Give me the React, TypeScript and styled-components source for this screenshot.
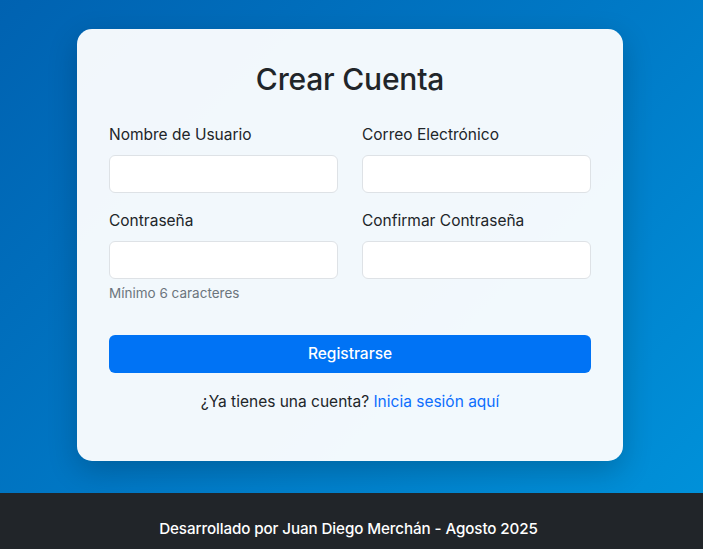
import React from "react";
import styled, { createGlobalStyle } from "styled-components";

const Global = createGlobalStyle`
  * { box-sizing: border-box; }
  html, body { margin: 0; padding: 0; }
  body {
    font-family: Inter, "Noto Sans", "Liberation Sans", sans-serif;
    color: #212529;
    font-size: 16px;
    line-height: 1.5;
  }
`;

const Page = styled.div`
  min-height: 100vh;
  display: flex;
  flex-direction: column;
  background: linear-gradient(135deg, #0062b1 0%, #0079c6 50%, #0093db 100%);
`;

const Main = styled.main`
  flex: 1;
  display: flex;
  align-items: center;
  justify-content: center;
  padding: 28px 3px 32px 0;
`;

const Card = styled.div`
  width: 546px;
  background: rgba(255, 255, 255, 0.95);
  border-radius: 15px;
  padding: 32px 32px 47px;
  box-shadow: 0 10px 30px rgba(0, 0, 0, 0.2);
`;

const Title = styled.h2`
  margin: 0 0 26px;
  text-align: center;
  font-size: 30px;
  font-weight: 500;
  line-height: 1.2;
  letter-spacing: -0.2px;
`;

const Grid = styled.div`
  display: grid;
  grid-template-columns: minmax(0, 1fr) minmax(0, 1fr);
  column-gap: 24px;
  row-gap: 16px;
`;

const Field = styled.div`
  display: flex;
  flex-direction: column;
  min-width: 0;
`;

const Label = styled.label`
  font-size: 15.5px;
  margin-bottom: 8px;
  line-height: 24px;
`;

const Input = styled.input`
  width: 100%;
  min-width: 0;
  height: 38px;
  border: 1px solid #dee2e6;
  border-radius: 6px;
  background: #fff;
  padding: 6px 12px;
  font-size: 16px;
  outline: none;
`;

const Help = styled.div`
  margin-top: 4px;
  font-size: 13.5px;
  color: #6c757d;
  line-height: 21px;
`;

const Button = styled.button`
  display: block;
  width: 100%;
  height: 38px;
  margin-top: 31px;
  border: none;
  border-radius: 6px;
  background: #0073f5;
  color: #fff;
  font-family: inherit;
  font-size: 15.5px;
  font-weight: 500;
  cursor: pointer;
`;

const Switch = styled.p`
  margin: 17px 0 0;
  text-align: center;
  font-size: 15.5px;
  line-height: 24px;
`;

const Link = styled.a`
  color: #0d6efd;
  text-decoration: none;
`;

const Footer = styled.footer`
  height: 56px;
  background: #212529;
  color: #fff;
  display: flex;
  align-items: flex-end;
  justify-content: center;
  padding: 0 6px 8px 0;
  font-size: 15.2px;
  font-weight: 500;
  letter-spacing: -0.1px;
`;

export default function App() {
  return (
    <>
      <Global />
      <Page>
        <Main>
          <Card>
            <Title>Crear Cuenta</Title>
            <Grid>
              <Field>
                <Label>Nombre de Usuario</Label>
                <Input type="text" />
              </Field>
              <Field>
                <Label>Correo Electrónico</Label>
                <Input type="email" />
              </Field>
              <Field>
                <Label>Contraseña</Label>
                <Input type="password" />
                <Help>Mínimo 6 caracteres</Help>
              </Field>
              <Field>
                <Label>Confirmar Contraseña</Label>
                <Input type="password" />
              </Field>
            </Grid>
            <Button>Registrarse</Button>
            <Switch>
              ¿Ya tienes una cuenta? <Link href="#">Inicia sesión aquí</Link>
            </Switch>
          </Card>
        </Main>
        <Footer>Desarrollado por Juan Diego Merchán - Agosto 2025</Footer>
      </Page>
    </>
  );
}
